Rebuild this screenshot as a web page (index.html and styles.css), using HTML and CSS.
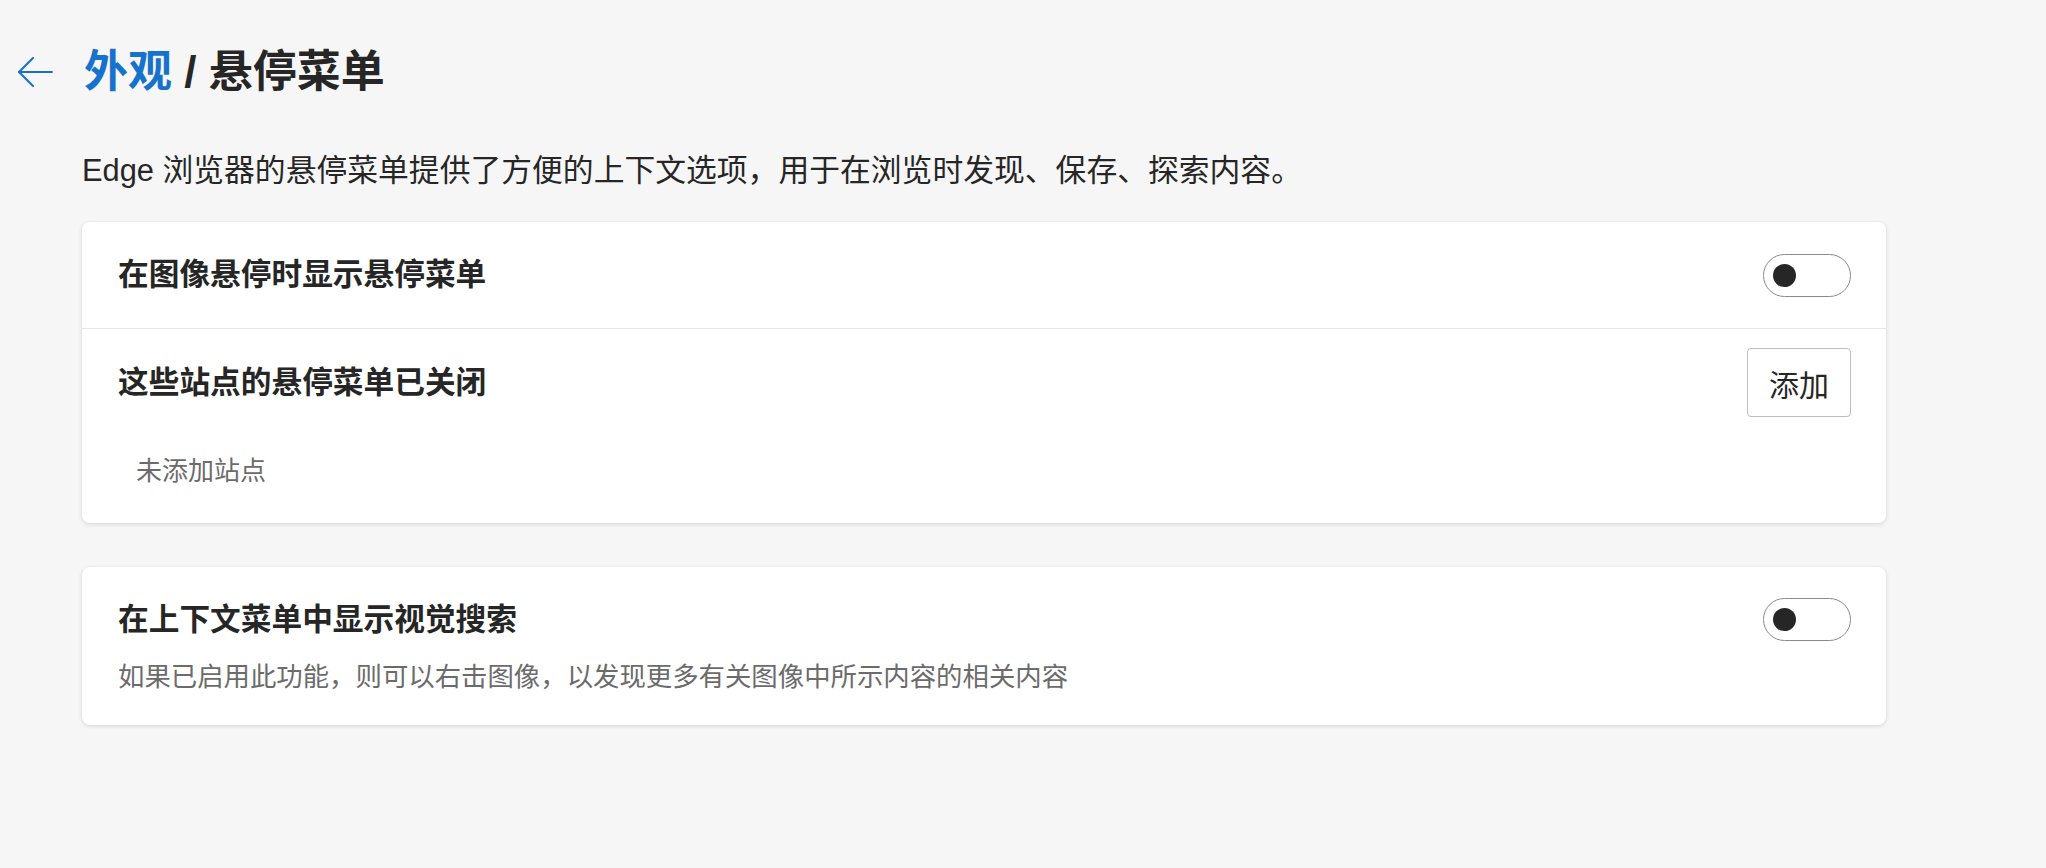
FILE: index.html
```html
<!DOCTYPE html>
<html lang="zh-CN">
<head>
    <meta charset="UTF-8">
    <meta name="viewport" content="width=device-width, initial-scale=1.0">
    <title>外观 / 悬停菜单</title>
    <link rel="stylesheet" href="styles.css">
</head>
<body>
    <div class="page">
        <header class="page-header">
            <a class="back-link" href="#" aria-label="返回">
                <svg width="36" height="30" viewBox="0 0 36 30" fill="none" stroke="currentColor" stroke-width="2" stroke-linecap="round" stroke-linejoin="round">
                    <path d="M35 15 H2"/>
                    <path d="M16 1 L2 15 L16 29"/>
                </svg>
            </a>
            <h1><span class="crumb">外观</span> / 悬停菜单</h1>
        </header>

        <main class="content">
            <p class="intro">Edge 浏览器的悬停菜单提供了方便的上下文选项，用于在浏览时发现、保存、探索内容。</p>

            <section class="card">
                <div class="row">
                    <span class="row-title">在图像悬停时显示悬停菜单</span>
                    <div class="toggle"><div class="knob"></div></div>
                </div>
                <div class="sites">
                    <div class="sites-head">
                        <span class="row-title">这些站点的悬停菜单已关闭</span>
                        <button class="add-button">添加</button>
                    </div>
                    <p class="empty">未添加站点</p>
                </div>
            </section>

            <section class="card card-visual">
                <div class="visual-head">
                    <span class="row-title">在上下文菜单中显示视觉搜索</span>
                    <div class="toggle"><div class="knob"></div></div>
                </div>
                <p class="hint">如果已启用此功能，则可以右击图像，以发现更多有关图像中所示内容的相关内容</p>
            </section>
        </main>
    </div>
</body>
</html>
```

FILE: styles.css
```css
/* Reset */
* {
    margin: 0;
    padding: 0;
    box-sizing: border-box;
}

body {
    background: #f6f6f6;
    color: #262626;
    font-family: "Liberation Sans", "Noto Sans CJK SC", sans-serif;
}

.page {
    padding: 44px 0 40px 17px;
}

/* Header with back arrow */
.page-header {
    display: flex;
    align-items: center;
    gap: 31px;
    height: 56px;
}

.back-link {
    display: flex;
    color: #1672cc;
}

h1 {
    font-size: 44px;
    line-height: 56px;
    font-weight: 700;
    color: #262626;
}

h1 .crumb {
    color: #1672cc;
}

/* Main column */
.content {
    margin-left: 65px;
    width: 1804px;
}

.intro {
    font-size: 30.8px;
    line-height: 40px;
    margin-top: 51px;
    margin-bottom: 31px;
}

.card {
    background: #ffffff;
    border-radius: 8px;
    box-shadow: 0 1px 4px rgba(0, 0, 0, 0.14);
    margin-bottom: 44px;
}

.row {
    display: flex;
    align-items: center;
    justify-content: space-between;
    height: 107px;
    padding: 0 35px 0 36px;
    border-bottom: 1px solid #e6e6e6;
}

.row-title {
    font-size: 30.7px;
    line-height: 40px;
    font-weight: 700;
}

/* Toggle switch (off) */
.toggle {
    display: flex;
    align-items: center;
    width: 88px;
    height: 43px;
    padding: 0 9px;
    border: 1.5px solid #8a8a8a;
    border-radius: 22px;
}

.knob {
    width: 23px;
    height: 23px;
    border-radius: 50%;
    background: #262626;
}

/* Blocked sites list */
.sites {
    padding: 19px 35px 34px 36px;
}

.sites-head {
    display: flex;
    align-items: center;
    justify-content: space-between;
}

.add-button {
    width: 104px;
    height: 69px;
    background: #ffffff;
    border: 1px solid #bdbdbd;
    border-radius: 4px;
    font-family: inherit;
    font-size: 30px;
    color: #262626;
}

.empty {
    font-size: 26px;
    line-height: 36px;
    color: #6b6b6b;
    margin-top: 36px;
    padding-left: 18px;
}

/* Visual search card */
.card-visual {
    padding: 31px 35px 30px 36px;
}

.visual-head {
    display: flex;
    align-items: center;
    justify-content: space-between;
}

.hint {
    font-size: 26.4px;
    line-height: 36px;
    color: #6b6b6b;
    margin-top: 18px;
}
```
